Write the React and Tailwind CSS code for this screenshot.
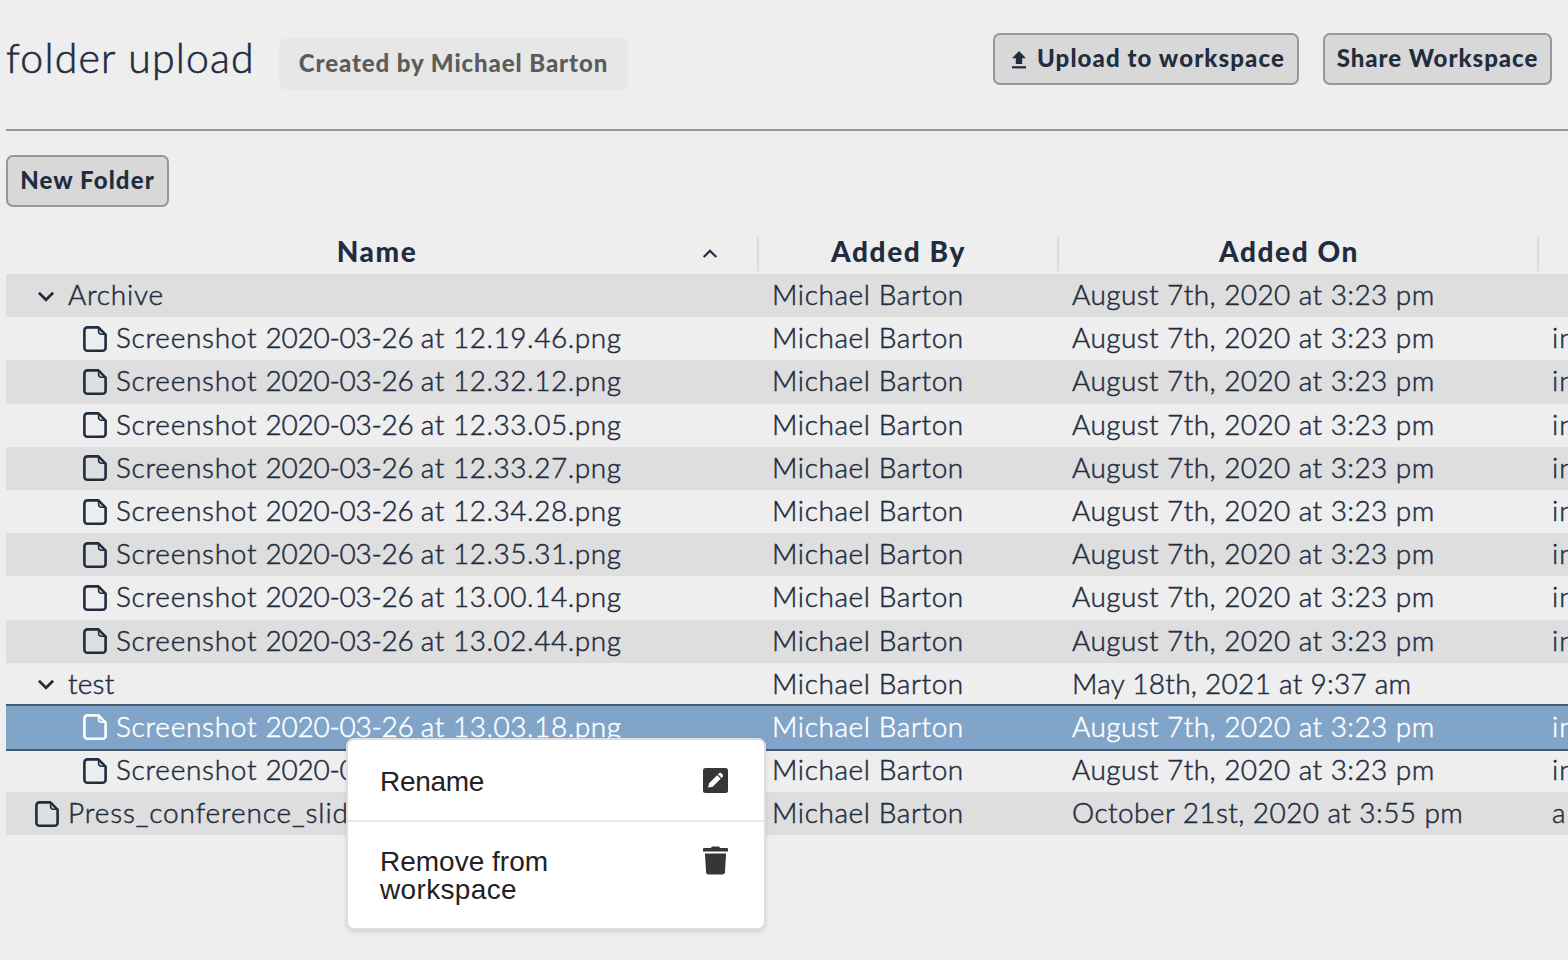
const person = "Michael Barton";
const archived = "August 7th, 2020 at 3:23 pm";

const rows = [
  { kind: "folder", name: "Archive", date: archived },
  { kind: "nested", time: "12.19.46", date: archived, note: "in" },
  { kind: "nested", time: "12.32.12", date: archived, note: "in" },
  { kind: "nested", time: "12.33.05", date: archived, note: "in" },
  { kind: "nested", time: "12.33.27", date: archived, note: "in" },
  { kind: "nested", time: "12.34.28", date: archived, note: "in" },
  { kind: "nested", time: "12.35.31", date: archived, note: "in" },
  { kind: "nested", time: "13.00.14", date: archived, note: "in" },
  { kind: "nested", time: "13.02.44", date: archived, note: "in" },
  { kind: "folder", name: "test", date: "May 18th, 2021 at 9:37 am", nameTracking: "tracking-[0.2px]", dateTracking: "tracking-[0.27px]" },
  { kind: "nested", time: "13.03.18", date: archived, note: "in", selected: true },
  { kind: "nested", time: "13.03.25", date: archived, note: "in" },
  { kind: "file", name: "Press_conference_slides.pdf", date: "October 21st, 2020 at 3:55 pm", note: "ap", nameTracking: "tracking-[0.88px]" },
];

function DocIcon() {
  return (
    <svg className="h-7 w-6 shrink-0" viewBox="0 0 24 28" fill="none" stroke="currentColor" strokeWidth="2.6" strokeLinejoin="round">
      <path d="M4.2 2.4H15.4L22.6 9.6V22.8A3 3 0 0 1 19.6 25.8H4.4A3 3 0 0 1 1.4 22.8V5.4A3 3 0 0 1 4.4 2.4Z" />
      <path d="M15.6 2.8V6.2A3 3 0 0 0 18.6 9.2H22" strokeWidth="1.6" />
    </svg>
  );
}

function ChevronDown() {
  return (
    <svg className="h-7 w-6 shrink-0" viewBox="0 0 24 28" fill="none" stroke="currentColor" strokeWidth="2.6">
      <path d="M3.9 10.8 11 17.8 18.1 10.8" />
    </svg>
  );
}

function UploadIcon() {
  return (
    <svg className="ml-4 mr-[10px] mt-[4px] h-[18px] w-4 shrink-0" viewBox="0 0 16 18" fill="currentColor">
      <path d="M8 0 15 7.3H11.2V13H4.8V7.3H1Z" />
      <path d="M1 15.2H15V17.4H1Z" />
    </svg>
  );
}

function NameCell({ row }) {
  if (row.kind === "nested") {
    return (
      <div className="flex h-full w-[752px] shrink-0 items-center pl-[77px]">
        <DocIcon />
        <span className="ml-[9px] whitespace-pre pb-[3px]">
          <span className="tracking-[0.72px]">Screenshot </span>
          <span className="tracking-[-0.27px]">2020-03-26 </span>
          <span className="tracking-[0.52px]">at {row.time}.png</span>
        </span>
      </div>
    );
  }
  return (
    <div className="flex h-full w-[752px] shrink-0 items-center pl-[29px]">
      {row.kind === "folder" ? <ChevronDown /> : <DocIcon />}
      <span className={`ml-[9px] pb-[3px] ${row.nameTracking || "tracking-[0.75px]"}`}>{row.name}</span>
    </div>
  );
}

function Row({ row, index }) {
  const tone = row.selected
    ? "relative bg-[#81a4c9] text-white shadow-[0_-2px_0_#475b70,0_2px_0_#475b70]"
    : index % 2 === 0
      ? "bg-[#dedede]"
      : "";
  return (
    <div className={`flex h-[43.2px] items-center whitespace-nowrap ${tone}`}>
      <NameCell row={row} />
      <div className="w-[300px] shrink-0 pb-[3px] pl-[14px] tracking-[0.6px]">{person}</div>
      <div className={`w-[480px] shrink-0 pb-[3px] pl-[14px] ${row.dateTracking || "tracking-[0.42px]"}`}>{row.date}</div>
      <div className="w-[300px] shrink-0 pb-[3px] pl-[14px] tracking-[1px]">{row.note}</div>
    </div>
  );
}

function Button({ children, className }) {
  return (
    <button className={`flex h-[52px] items-center justify-center whitespace-nowrap rounded-[7px] border-2 border-[#979797] bg-[#d8d8d8] pb-[2px] text-2xl/6 font-black ${className}`}>
      {children}
    </button>
  );
}

function ContextMenu() {
  return (
    <div className="absolute left-[346px] top-[738px] w-[420px] rounded-lg border-2 border-[#dedede] bg-white font-['Liberation_Sans',sans-serif] text-[28px]/7 text-[#222] shadow-[0_2px_4px_rgba(0,0,0,0.12)]">
      <div className="flex h-[82px] justify-between border-b-2 border-[#e8e8e8] pl-8 pr-9 pt-7">
        <span className="tracking-[-0.3px]">Rename</span>
        <svg className="h-[25px] w-[25px]" viewBox="0 0 25 25">
          <rect width="25" height="25" rx="2.5" fill="#363636" />
          <path d="M5.1 19.6 6.1 15.2 14.1 7.2 17.7 10.8 9.7 18.8Z M15 6.3 16.4 4.9Q17.2 4.4 18 5.1L19.8 6.9Q20.4 7.7 19.9 8.6L18.6 9.9Z" fill="#fff" />
        </svg>
      </div>
      <div className="flex h-[106px] justify-between pl-8 pr-9 pt-[26px]">
        <span className="w-[220px]">
          Remove from <span className="tracking-[0.35px]">workspace</span>
        </span>
        <svg className="-mt-[2px] h-[29px] w-[25px]" viewBox="0 0 25 29" fill="#363636">
          <path d="M1 2.1H7.8L9 .6H16L17.2 2.1H24Q25 2.2 25 3.2V5.6H0V3.2Q0 2.2 1 2.1Z" />
          <path d="M1.9 7.4H23.1L21.9 26.2Q21.7 28.6 19.4 28.6H5.6Q3.3 28.6 3.1 26.2Z" />
        </svg>
      </div>
    </div>
  );
}

export default function App() {
  return (
    <div className="relative h-[960px] w-[1568px] overflow-hidden bg-[#eeeeee] pl-[6px] font-['Lato',sans-serif] text-[#1f2d3f]">
      <header className="flex h-[131px] items-start border-b-2 border-[#979797]">
        <h1 className="mt-[33px] w-[273px] whitespace-nowrap text-[41px]/[50px] font-light tracking-[1.2px] [-webkit-text-stroke:0.6px]">folder upload</h1>
        <div className="mt-[38px] flex h-[52px] w-[349px] items-center justify-center rounded-lg bg-[#e7e7e7] pb-[2px] text-2xl/6 font-black tracking-[0.92px] text-[#5c5c5c]">
          Created by Michael Barton
        </div>
        <div className="ml-auto mr-4 mt-[33px] flex gap-6">
          <Button className="w-[306px] tracking-[1.1px]">
            <UploadIcon />
            <span className="flex-1 text-left">Upload to workspace</span>
          </Button>
          <Button className="w-[229px] tracking-[0.98px]">Share Workspace</Button>
        </div>
      </header>

      <Button className="mt-6 w-[163px] tracking-[1.1px]">New Folder</Button>

      <div className="mt-[30px] flex h-[37px] w-[1832px] text-[28px]/[28px] font-black tracking-[1.6px]">
        <div className="flex h-[34px] w-[753px] shrink-0 items-start border-r-2 border-[#dcdcdc]">
          <span className="w-[742px] text-center">Name</span>
          <svg className="absolute left-[702px] top-[247px] h-4 w-4" viewBox="0 0 16 16" fill="none" stroke="currentColor" strokeWidth="2.2">
            <path d="M1.7 10.1 8 3.7 14.3 10.1" />
          </svg>
        </div>
        <div className="h-[34px] w-[300px] shrink-0 border-r-2 border-[#dcdcdc] pr-[19px] text-center">Added By</div>
        <div className="h-[34px] w-[480px] shrink-0 border-r-2 border-[#dcdcdc] pr-[18px] text-center">Added On</div>
      </div>

      <div className="w-[1832px] text-[28px]/[34px] font-light [-webkit-text-stroke:0.5px]">
        {rows.map((row, index) => (
          <Row key={index} row={row} index={index} />
        ))}
      </div>

      <ContextMenu />
    </div>
  );
}
